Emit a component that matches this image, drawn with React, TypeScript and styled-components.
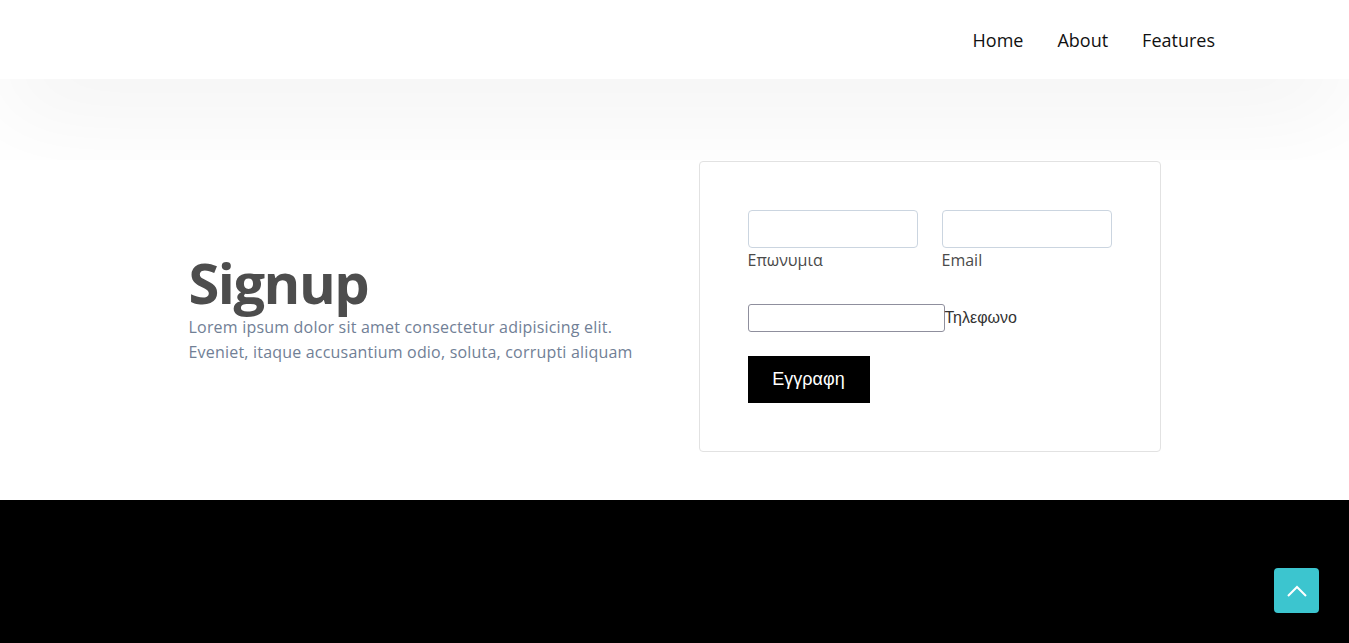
import React from "react";
import styled, { createGlobalStyle } from "styled-components";

const Global = createGlobalStyle`
  html, body { margin: 0; padding: 0; background: #fff; }
  body { font-family: "Open Sans", "Noto Sans", sans-serif; }
  * { box-sizing: border-box; }
`;

const Header = styled.header`
  position: relative;
  z-index: 1;
  height: 79px;
  background: #fff;
  box-shadow: 0 30px 100px rgba(0, 0, 0, 0.06);
  display: flex;
  align-items: center;
  justify-content: flex-end;
  padding-right: 134px;
`;

const Nav = styled.nav`
  display: flex;
  gap: 34px;
`;

const NavLink = styled.a`
  font-family: "Open Sans", sans-serif;
  font-size: 18px;
  color: #111;
  text-decoration: none;
`;

const Spacer = styled.div`
  height: 81px;
`;

const Section = styled.section`
  position: relative;
  z-index: 2;
  background: #fff;
  padding: 1px 0 48px;
`;

const Container = styled.div`
  width: 972px;
  margin: 0 auto;
  display: grid;
  grid-template-columns: 1fr 462px;
  align-items: center;
`;

const Intro = styled.div`
  display: flex;
  flex-direction: column;
`;

const Title = styled.h1`
  margin: 0;
  font-family: "Open Sans", sans-serif;
  font-weight: 700;
  font-size: 56px;
  letter-spacing: -1.5px;
  line-height: 66px;
  color: #4d4d4d;
`;

const Lead = styled.p`
  margin: 0;
  font-size: 16px;
  letter-spacing: 0.2px;
  line-height: 25px;
  color: #718096;
`;

const Card = styled.form`
  border: 1px solid #e2e2e2;
  border-radius: 4px;
  padding: 48px 48px 48px;
  display: flex;
  flex-direction: column;
  align-items: flex-start;
`;

const Row = styled.div`
  display: flex;
  gap: 24px;
  margin-bottom: 32px;
`;

const Field = styled.label`
  display: flex;
  flex-direction: column;
  font-size: 16px;
  color: #4a4a4a;
  line-height: 24px;
`;

const TextInput = styled.input`
  width: 170px;
  height: 38px;
  border: 1px solid #cbd5e0;
  border-radius: 4px;
  padding: 0 8px;
  font-size: 16px;
  outline: none;
`;

const InlineField = styled.label`
  display: flex;
  align-items: center;
  font-family: "Liberation Sans", Arial, sans-serif;
  font-size: 16px;
  color: #333;
  margin-bottom: 24px;
`;

const PlainInput = styled.input`
  width: 197px;
  height: 28px;
  border: 1px solid #8f8f9d;
  border-radius: 3px;
  padding: 1px 2px;
  outline: none;
`;

const Submit = styled.button`
  width: 122px;
  height: 47px;
  background: #000;
  color: #fff;
  border: none;
  font-family: "Liberation Sans", Arial, sans-serif;
  font-size: 18px;
  cursor: pointer;
`;

const Footer = styled.footer`
  position: relative;
  height: 200px;
  background: #000;
`;

const ScrollTop = styled.a`
  position: fixed;
  right: 30px;
  top: 568px;
  width: 45px;
  height: 45px;
  border-radius: 4px;
  background: #3cc5cf;
  display: flex;
  align-items: center;
  justify-content: center;
`;

export default function App() {
  return (
    <>
      <Global />
      <Header>
        <Nav>
          <NavLink href="#">Home</NavLink>
          <NavLink href="#">About</NavLink>
          <NavLink href="#">Features</NavLink>
        </Nav>
      </Header>
      <Spacer />
      <Section>
        <Container>
          <Intro>
            <Title>Signup</Title>
            <Lead>
              Lorem ipsum dolor sit amet consectetur adipisicing elit.
              <br />
              Eveniet, itaque accusantium odio, soluta, corrupti aliquam
            </Lead>
          </Intro>
          <Card onSubmit={(e) => e.preventDefault()}>
            <Row>
              <Field>
                <TextInput type="text" />
                Επωνυμια
              </Field>
              <Field>
                <TextInput type="email" />
                Email
              </Field>
            </Row>
            <InlineField>
              <PlainInput type="tel" />
              Τηλεφωνο
            </InlineField>
            <Submit type="submit">Εγγραφη</Submit>
          </Card>
        </Container>
      </Section>
      <Footer />
      <ScrollTop href="#">
        <svg width="20" height="12" viewBox="0 0 20 12" fill="none">
          <path d="M1 11L10 2l9 9" stroke="#fff" strokeWidth="2" />
        </svg>
      </ScrollTop>
    </>
  );
}
